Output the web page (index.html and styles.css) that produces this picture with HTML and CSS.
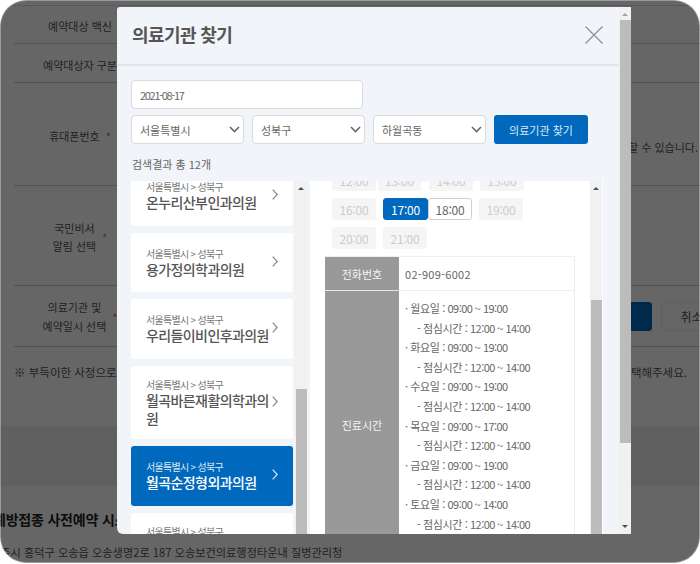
FILE: index.html
```html
<!DOCTYPE html>
<html lang="ko">
<head>
    <meta charset="UTF-8">
    <title>의료기관 찾기</title>
    <link rel="stylesheet" href="styles.css">
</head>
<body>
    <div class="screen">
        <div class="page">
            <div class="form-table">
                <div class="form-row row-vaccine"><div class="form-label">예약대상 백신</div></div>
                <div class="form-row row-target"><div class="form-label">예약대상자 구분</div></div>
                <div class="form-row row-phone">
                    <div class="form-label">휴대폰번호 <span class="req">*</span></div>
                    <div class="form-value form-value-end">할 수 있습니다.</div>
                </div>
                <div class="form-row row-notify">
                    <div class="form-label">국민비서<br>알림 선택 <span class="req">*</span></div>
                </div>
                <div class="form-row row-hospital">
                    <div class="form-label">의료기관 및<br>예약일시 선택 <span class="req">*</span></div>
                    <div class="form-value form-buttons">
                        <button class="page-btn page-btn-primary"></button>
                        <button class="page-btn page-btn-cancel">취소</button>
                    </div>
                </div>
            </div>
            <div class="form-note">
                <span>※ 부득이한 사정으로 예약을</span>
                <span>선택해주세요.</span>
            </div>
            <div class="page-band"></div>
            <div class="page-foot">
                <h3>예방접종 사전예약 시스템</h3>
                <p>충주시 흥덕구 오송읍 오송생명2로 187 오송보건의료행정타운내 질병관리청</p>
            </div>
        </div>
        <div class="dim"></div>

        <div class="modal">
            <div class="modal-main">
                <div class="modal-header">
                    <h2>의료기관 찾기</h2>
                    <svg class="modal-close" width="18" height="18" viewBox="0 0 18 18">
                        <path d="M.5.5l17 17M17.5.5l-17 17" stroke="#8d8d8d" stroke-width="1.1" fill="none"/>
                    </svg>
                </div>
                <div class="modal-body">
                    <input type="text" class="date-input" value="2021-08-17">
                    <div class="search-row">
                        <select><option>서울특별시</option></select>
                        <select><option>성북구</option></select>
                        <select><option>하월곡동</option></select>
                        <button class="search-btn">의료기관 찾기</button>
                    </div>
                    <div class="result-count">검색결과 총 12개</div>
                    <div class="result-area">
                        <div class="hospital-list">
                            <div class="hospital first">
                                <div class="hospital-text">
                                    <div class="hospital-addr">서울특별시 &gt; 성북구</div>
                                    <div class="hospital-name">온누리산부인과의원</div>
                                </div>
                                <svg class="chevron" width="6" height="11" viewBox="0 0 6 11"><path d="M.7.7l4.5 4.8L.7 10.3"/></svg>
                            </div>
                            <div class="hospital">
                                <div class="hospital-text">
                                    <div class="hospital-addr">서울특별시 &gt; 성북구</div>
                                    <div class="hospital-name">용가정의학과의원</div>
                                </div>
                                <svg class="chevron" width="6" height="11" viewBox="0 0 6 11"><path d="M.7.7l4.5 4.8L.7 10.3"/></svg>
                            </div>
                            <div class="hospital">
                                <div class="hospital-text">
                                    <div class="hospital-addr">서울특별시 &gt; 성북구</div>
                                    <div class="hospital-name">우리들이비인후과의원</div>
                                </div>
                                <svg class="chevron" width="6" height="11" viewBox="0 0 6 11"><path d="M.7.7l4.5 4.8L.7 10.3"/></svg>
                            </div>
                            <div class="hospital tall">
                                <div class="hospital-text">
                                    <div class="hospital-addr">서울특별시 &gt; 성북구</div>
                                    <div class="hospital-name">월곡바른재활의학과의원</div>
                                </div>
                                <svg class="chevron" width="6" height="11" viewBox="0 0 6 11"><path d="M.7.7l4.5 4.8L.7 10.3"/></svg>
                            </div>
                            <div class="hospital active">
                                <div class="hospital-text">
                                    <div class="hospital-addr">서울특별시 &gt; 성북구</div>
                                    <div class="hospital-name">월곡순정형외과의원</div>
                                </div>
                                <svg class="chevron" width="6" height="11" viewBox="0 0 6 11"><path d="M.7.7l4.5 4.8L.7 10.3"/></svg>
                            </div>
                            <div class="hospital clipped">
                                <div class="hospital-text">
                                    <div class="hospital-addr">서울특별시 &gt; 성북구</div>
                                </div>
                            </div>
                        </div>
                        <div class="scrollbar list-scroll">
                            <span class="arrow-up"></span>
                            <span class="thumb"></span>
                        </div>
                        <div class="detail">
                            <div class="detail-main">
                                <div class="time-grid">
                                    <div class="time-row first-row">
                                        <span class="time tight-2">12:00</span>
                                        <span class="time narrow">13:00</span>
                                        <span class="time">14:00</span>
                                        <span class="time">15:00</span>
                                    </div>
                                    <div class="time-row">
                                        <span class="time">16:00</span>
                                        <span class="time open selected">17:00</span>
                                        <span class="time open">18:00</span>
                                        <span class="time">19:00</span>
                                    </div>
                                    <div class="time-row">
                                        <span class="time">20:00</span>
                                        <span class="time">21:00</span>
                                    </div>
                                </div>
                                <div class="info-table">
                                    <div class="info-head">전화번호</div>
                                    <div class="info-cell phone">02-909-6002</div>
                                    <div class="info-head">진료시간</div>
                                    <div class="info-cell hours">
                                        <div>· 월요일 : <span class="num">09:00 ~ 19:00</span></div>
                                        <div class="lunch">- 점심시간 : <span class="num">12:00 ~ 14:00</span></div>
                                        <div>· 화요일 : <span class="num">09:00 ~ 19:00</span></div>
                                        <div class="lunch">- 점심시간 : <span class="num">12:00 ~ 14:00</span></div>
                                        <div>· 수요일 : <span class="num">09:00 ~ 19:00</span></div>
                                        <div class="lunch">- 점심시간 : <span class="num">12:00 ~ 14:00</span></div>
                                        <div>· 목요일 : <span class="num">09:00 ~ 17:00</span></div>
                                        <div class="lunch">- 점심시간 : <span class="num">12:00 ~ 14:00</span></div>
                                        <div>· 금요일 : <span class="num">09:00 ~ 19:00</span></div>
                                        <div class="lunch">- 점심시간 : <span class="num">12:00 ~ 14:00</span></div>
                                        <div>· 토요일 : <span class="num">09:00 ~ 14:00</span></div>
                                        <div class="lunch">- 점심시간 : <span class="num">12:00 ~ 14:00</span></div>
                                    </div>
                                </div>
                            </div>
                            <div class="scrollbar detail-scroll">
                                <span class="arrow-up"></span>
                                <span class="thumb"></span>
                            </div>
                        </div>
                    </div>
                </div>
            </div>
            <div class="scrollbar modal-scroll">
                <span class="arrow-up light"></span>
                <span class="thumb"></span>
                <span class="arrow-down"></span>
            </div>
        </div>
    </div>
</body>
</html>
```

FILE: styles.css
```css
* {
    margin: 0;
    padding: 0;
    box-sizing: border-box;
}

body {
    width: 700px;
    height: 564px;
    background: #fff;
    overflow: hidden;
    font-family: "Noto Sans CJK KR", "Noto Sans", sans-serif;
}

.screen {
    width: 700px;
    height: 563px;
    position: relative;
    overflow: hidden;
    border-radius: 26px;
}

/* page behind the modal */
.page {
    height: 100%;
    background: #fff;
    color: #555;
    font-size: 11px;
    padding-top: 5px;
    overflow: hidden;
}

.form-table {
    margin-left: 14px;
    border-top: 1px solid #ddd;
}

.form-row {
    display: flex;
    border-bottom: 1px solid #ccc;
}

.row-vaccine { height: 38px; }
.row-target { height: 39px; }
.row-phone { height: 103px; }
.row-notify { height: 100px; }
.row-hospital { height: 61px; }

.form-label {
    width: 132px;
    flex-shrink: 0;
    display: flex;
    align-items: center;
    justify-content: center;
    text-align: center;
    line-height: 18px;
    padding-top: 3px;
}

.row-hospital .form-label {
    line-height: 19px;
    padding-top: 2px;
}

.req {
    color: #d66;
    margin-left: 6px;
}

.form-value {
    flex: 1;
    display: flex;
    align-items: center;
    min-width: 0;
}

.form-value-end {
    justify-content: flex-end;
    padding: 26px 2px 0 0;
}

.form-buttons {
    padding-left: 414px;
    gap: 9px;
}

.page-btn {
    width: 92px;
    height: 29px;
    flex-shrink: 0;
    border: 1px solid #eee;
    border-radius: 3px;
    background: #fff;
    color: #555;
    font-family: inherit;
    font-size: 12px;
}

.page-btn-primary {
    background: #0069bd;
    border-color: #0069bd;
}

.page-btn-cancel {
    width: 61px;
}

.form-note {
    display: flex;
    justify-content: space-between;
    padding: 16px 13px 0 14px;
    line-height: 18px;
    font-size: 11.5px;
}

.page-band {
    height: 60px;
    margin-top: 45px;
    background: #f1f1f1;
}

.page-foot {
    padding-top: 23px;
    white-space: nowrap;
}

.page-foot h3 {
    font-size: 14px;
    font-weight: 700;
    color: #222;
    margin-left: -7px;
    letter-spacing: -.2px;
}

.page-foot p {
    font-size: 11.2px;
    margin: 15px 0 0 -10px;
}

.dim {
    position: absolute;
    top: 0;
    left: 0;
    right: 0;
    bottom: 0;
    background: rgba(0, 0, 0, .6);
    border-radius: inherit;
    box-shadow: inset 0 0 0 1px rgba(255, 255, 255, .35);
}

/* modal */
.modal {
    position: absolute;
    left: 117px;
    top: 7px;
    width: 514px;
    height: 527px;
    display: flex;
    background: #f1f4f8;
    border-radius: 3px 0 0 6px;
    overflow: hidden;
}

.modal-main {
    flex: 1;
    min-width: 0;
    display: flex;
    flex-direction: column;
}

.modal-header {
    height: 59px;
    flex-shrink: 0;
    display: flex;
    align-items: center;
    justify-content: space-between;
    padding: 0 16px 3px 15px;
    border-bottom: 2px solid #e2e5e9;
}

.modal-header h2 {
    font-size: 18px;
    font-weight: 700;
    color: #555;
    letter-spacing: -.6px;
}

.modal-close {
    margin-top: 2px;
}

.modal-body {
    flex: 1;
    min-height: 0;
    display: flex;
    flex-direction: column;
    padding: 14px 0 0 14px;
}

.date-input {
    width: 232px;
    height: 29px;
    padding: 0 8px;
    border: 1px solid #d8dade;
    border-radius: 4px;
    background: #fff;
    color: #666;
    font: 11px "Noto Sans CJK KR", sans-serif;
    letter-spacing: -1.3px;
}

.search-row {
    display: flex;
    gap: 8px;
    margin-top: 6px;
}

select {
    width: 113px;
    height: 29px;
    padding: 0 8px;
    border: 1px solid #d8dade;
    border-radius: 4px;
    font: 11px "Noto Sans CJK KR", sans-serif;
    color: #666;
    -webkit-appearance: none;
    background: #fff url("data:image/svg+xml;charset=UTF-8,%3csvg xmlns='http://www.w3.org/2000/svg' viewBox='0 0 11 7'%3e%3cpath d='M1 1l4.5 4.5L10 1' fill='none' stroke='%23666' stroke-width='1.6'/%3e%3c/svg%3e") no-repeat right 3px center;
    background-size: 11px 7px;
}

.search-btn {
    width: 94px;
    height: 29px;
    border: none;
    border-radius: 3px;
    background: #0069bd;
    color: #dbe9f5;
    font: 11px "Noto Sans CJK KR", sans-serif;
}

.result-count {
    height: 37px;
    padding: 11px 0 0 1px;
    font-size: 11px;
    line-height: 18px;
    color: #666;
}

.result-area {
    flex: 1;
    min-height: 0;
    display: flex;
    overflow: hidden;
}

.hospital-list {
    width: 162px;
    flex-shrink: 0;
    display: flex;
    flex-direction: column;
    gap: 7px;
}

.hospital {
    flex-shrink: 0;
    height: 59.5px;
    display: flex;
    align-items: center;
    justify-content: space-between;
    padding: 0 15px 0 15px;
    background: #fff;
    border-radius: 3px;
    color: #555;
}

.hospital.first {
    margin-top: -15px;
}

.hospital.tall {
    height: 73.5px;
}

.hospital.active {
    background: #0069bd;
    color: #fff;
}

.hospital.clipped {
    align-items: flex-start;
    padding-top: 12px;
}

.hospital-text {
    min-width: 0;
    width: 124px;
    flex-shrink: 0;
}

.hospital-addr {
    font-size: 10px;
    line-height: 13px;
    letter-spacing: -.7px;
    color: #777;
}

.active .hospital-addr {
    color: #dbe9f5;
}

.hospital-name {
    font-size: 14px;
    font-weight: 500;
    line-height: 18px;
    letter-spacing: -.6px;
}

.chevron {
    flex-shrink: 0;
    margin-bottom: 2px;
}

.chevron path {
    fill: none;
    stroke: #888;
    stroke-width: 1.2;
}

.active .chevron path {
    stroke: #dbe9f5;
}

/* fake scrollbars */
.scrollbar {
    width: 12px;
    flex-shrink: 0;
    display: flex;
    flex-direction: column;
    align-items: center;
    background: #f1f1f1;
}

.thumb {
    display: block;
    width: 11px;
    background: #bcbcbc;
}

.arrow-up,
.arrow-down {
    display: block;
    width: 0;
    height: 0;
    border-left: 3px solid transparent;
    border-right: 3px solid transparent;
}

.arrow-up {
    border-bottom: 3px solid #505050;
    margin-top: 6px;
}

.arrow-up.light {
    border-bottom-color: #a3a3a3;
}

.arrow-down {
    border-top: 3px solid #505050;
    margin-top: auto;
    margin-bottom: 6px;
}

.list-scroll {
    margin-left: 2px;
}

.list-scroll .thumb {
    margin-top: 199px;
    flex: 1;
}

.detail-scroll .thumb {
    margin-top: 110px;
    flex: 1;
}

.modal-scroll .thumb {
    margin-top: 4px;
    height: 423px;
}

.detail {
    width: 293px;
    flex-shrink: 0;
    margin-left: 3px;
    background: #fff;
    display: flex;
    overflow: hidden;
}

.detail-main {
    width: 280px;
    flex-shrink: 0;
    padding-left: 15px;
}

.detail-scroll {
    margin-right: 1px;
}

.time-grid {
    margin-top: -12px;
    padding-left: 7px;
    display: flex;
    flex-direction: column;
    gap: 7px;
}

.time-row {
    display: flex;
    gap: 7px;
}

.time {
    width: 44px;
    height: 22px;
    display: flex;
    align-items: center;
    justify-content: center;
    background: #f5f5f5;
    color: #ccc;
    font-size: 12px;
    border-radius: 3px;
    letter-spacing: -.2px;
}

.time.tight-2 { margin-right: -5px; }
.time.narrow { width: 43px; margin-right: 1px; }

.time.open {
    background: #fff;
    color: #666;
    border: 1px solid #ccd0d6;
}

.time.selected {
    background: #0069bd;
    border-color: #0069bd;
    color: #fff;
    width: 45px;
    margin-right: -7px;
}

.info-table {
    display: grid;
    grid-template-columns: 74px 176px;
    width: 250px;
    margin-top: 7px;
    border-top: 1px solid #eef0f3;
}

.info-head {
    display: flex;
    align-items: center;
    justify-content: center;
    background: #999;
    color: #f4f4f4;
    font-size: 11px;
    border-bottom: 1px solid #e8e8e8;
}

.info-cell {
    border-right: 1px solid #e8eff7;
    border-bottom: 1px solid #e8eff7;
    padding-left: 6px;
    color: #666;
}

.phone {
    height: 34px;
    display: flex;
    align-items: center;
    font-size: 11px;
    letter-spacing: .3px;
}

.hours {
    min-height: 268px;
    padding-top: 8px;
    font-size: 11px;
    white-space: nowrap;
    letter-spacing: -.4px;
}

.hours > div {
    height: 19.6px;
    line-height: 19.6px;
}

.hours .num {
    letter-spacing: -.55px;
}

.hours .lunch {
    padding-left: 12px;
}
```
